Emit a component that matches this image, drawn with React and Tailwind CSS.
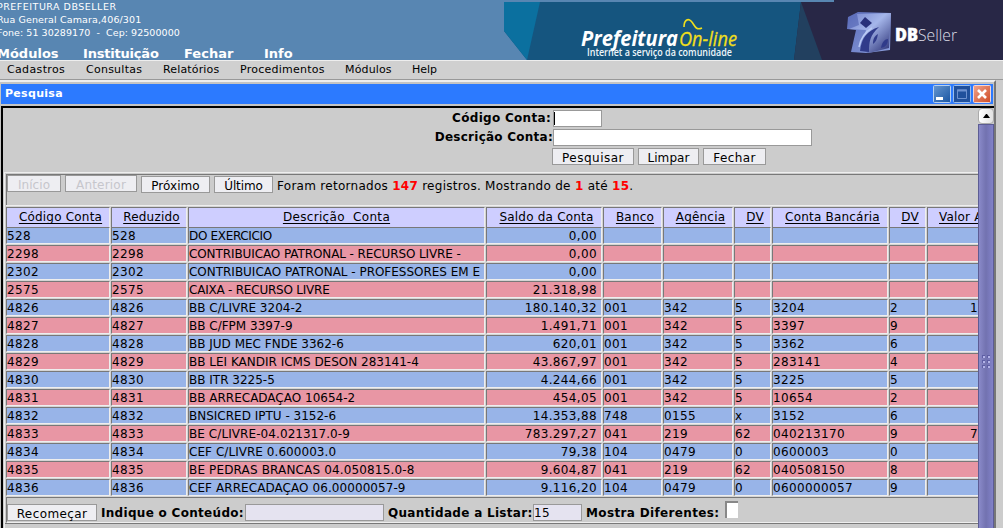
import React from "react";

const rows = [
  ["528", "DO EXERCICIO", "0,00", "", "", "", "", "", ""],
  ["2298", "CONTRIBUICAO PATRONAL - RECURSO LIVRE -", "0,00", "", "", "", "", "", ""],
  ["2302", "CONTRIBUICAO PATRONAL - PROFESSORES EM E", "0,00", "", "", "", "", "", ""],
  ["2575", "CAIXA - RECURSO LIVRE", "21.318,98", "", "", "", "", "", ""],
  ["4826", "BB C/LIVRE 3204-2", "180.140,32", "001", "342", "5", "3204", "2", "1"],
  ["4827", "BB C/FPM 3397-9", "1.491,71", "001", "342", "5", "3397", "9", ""],
  ["4828", "BB JUD MEC FNDE 3362-6", "620,01", "001", "342", "5", "3362", "6", ""],
  ["4829", "BB LEI KANDIR ICMS DESON 283141-4", "43.867,97", "001", "342", "5", "283141", "4", ""],
  ["4830", "BB ITR 3225-5", "4.244,66", "001", "342", "5", "3225", "5", ""],
  ["4831", "BB ARRECADAÇAO 10654-2", "454,05", "001", "342", "5", "10654", "2", ""],
  ["4832", "BNSICRED IPTU - 3152-6", "14.353,88", "748", "0155", "x", "3152", "6", ""],
  ["4833", "BE C/LIVRE-04.021317.0-9", "783.297,27", "041", "219", "62", "040213170", "9", "7"],
  ["4834", "CEF C/LIVRE 0.600003.0", "79,38", "104", "0479", "0", "0600003", "0", ""],
  ["4835", "BE PEDRAS BRANCAS 04.050815.0-8", "9.604,87", "041", "219", "62", "040508150", "8", ""],
  ["4836", "CEF ARRECADAÇAO 06.00000057-9", "9.116,20", "104", "0479", "0", "0600000057", "9", ""],
];

// Letter spacing of the description column, by account code.
const descriptionTracking = {
  528: "tracking-[-0.33px]",
  2298: "tracking-[-0.1px]",
  2302: "tracking-[-0.02px]",
  2575: "tracking-[-0.22px]",
  4833: "tracking-[0.08px]",
  4834: "tracking-[0.05px]",
  4835: "tracking-[0.15px]",
  4836: "tracking-[0.07px]",
};

const headers = ["Código Conta", "Reduzido", "Descrição\u00a0 Conta", "Saldo da Conta", "Banco", "Agência", "DV", "Conta Bancária", "DV"];

const columns = "grid grid-cols-[104px_76px_297px_116px_59px_70px_37px_116px_37px_110px] gap-x-px";
const inset = "border border-t-[#787878] border-l-[#787878] border-r-[#eeeeee] border-b-[#eeeeee]";

function Button({ className = "", children }) {
  return (
    <button className={`flex h-[17px] shrink-0 items-center justify-center border border-[#999] bg-[#eeeef2] pt-[3px] leading-none ${className}`}>
      {children}
    </button>
  );
}

function Banner() {
  return (
    <svg className="absolute right-0 top-0 h-[60px] w-[499px]" viewBox="504 0 499 60">
      <defs>
        <linearGradient id="cube" x1="0" y1="0" x2="1" y2="1">
          <stop offset="0" stopColor="#7585ce" />
          <stop offset=".45" stopColor="#a5b6ea" />
          <stop offset="1" stopColor="#242a70" />
        </linearGradient>
        <linearGradient id="side" x1="0" y1="0" x2="1" y2="1">
          <stop offset="0" stopColor="#596ab8" />
          <stop offset="1" stopColor="#8c9fdc" />
        </linearGradient>
      </defs>
      <path d="M504 2H834V0H1003V60H527L504 31Z" fill="#15557f" />
      <path d="M504 2H540L527 60L504 31Z" fill="#0b709f" />
      <path d="M801 2H834V0H1003V60H794Z" fill="#282746" />
      <path d="M801 2L822 60H794Z" fill="#22405f" />
      <text x="581" y="45.5" fill="#fff" fontFamily="Open Sans, sans-serif" fontSize="20.5" fontWeight="700" fontStyle="italic" textLength="97" lengthAdjust="spacingAndGlyphs">Prefeitura</text>
      <text x="679" y="45.5" fill="#f0df1c" stroke="#f0df1c" strokeWidth=".3" fontFamily="Open Sans, sans-serif" fontSize="20.5" fontStyle="italic" textLength="58" lengthAdjust="spacingAndGlyphs">On-line</text>
      <path d="M684 27C684 20 688 18 691 21C695 25 695 31 702 28" fill="none" stroke="#f0df1c" strokeWidth="1.6" />
      <text x="587" y="56" fill="#eef5fa" fontFamily="Open Sans, sans-serif" fontSize="10" fontWeight="600" textLength="145" lengthAdjust="spacingAndGlyphs">Internet a serviço da comunidade</text>
      <path d="M848 17L858 12L891 13L890 50L866 53L851 52L856 30L847 29Z" fill="url(#side)" />
      <path d="M857 14L891 13L889 48L869 53L861 50L866 30L849 29L859 25Z" fill="url(#cube)" />
      <path d="M865 17L872 23L866 28L860 23Z" fill="#28307a" />
      <path d="M860 51C862 37 867 31 879 27C870 35 869 42 869 52ZM873 44C873 38 875 36 878 34C877 39 876 42 873 44ZM881 48C882 42 885 39 888 39C888 44 886 47 881 48Z" fill="#303b8a" />
      <path d="M859 47C861 37 865 32 872 28" fill="none" stroke="#b9c9f5" strokeWidth="1.5" />
      <text x="895" y="41" fill="#fff" stroke="#fff" strokeWidth=".4" fontFamily="Open Sans, sans-serif" fontSize="17" fontWeight="800" textLength="23" lengthAdjust="spacingAndGlyphs">DB</text>
      <text x="918" y="41" fill="#dedee8" fontFamily="Open Sans, sans-serif" fontSize="17" fontWeight="300" textLength="39" lengthAdjust="spacingAndGlyphs">Seller</text>
    </svg>
  );
}

function WindowControls() {
  return (
    <svg className="h-[18px] w-[58px]" viewBox="0 0 58 18">
      <defs>
        <linearGradient id="blue" x1="0" y1="0" x2="1" y2="1"><stop stopColor="#6797d0" /><stop offset="1" stopColor="#1955a2" /></linearGradient>
        <linearGradient id="red" x1="0" y1="0" x2="1" y2="1"><stop stopColor="#f0a48d" /><stop offset="1" stopColor="#cf4b25" /></linearGradient>
      </defs>
      <rect x=".5" y=".5" width="17" height="17" rx="1" fill="url(#blue)" stroke="#b8d0ee" />
      <rect x="3" y="12" width="7" height="3" fill="#fff" />
      <rect x="20.5" y=".5" width="17" height="17" rx="1" fill="#20509c" stroke="#9bbce8" />
      <path d="M24.5 5H33.5V13.5H24.5Z" fill="none" stroke="#6d91d0" />
      <path d="M24 5.5H34" stroke="#6d91d0" strokeWidth="2" />
      <rect x="40.5" y=".5" width="17" height="17" rx="1" fill="url(#red)" stroke="#f2d6d5" />
      <path d="M45 5L53 13M53 5L45 13" stroke="#fff" strokeWidth="2.6" />
    </svg>
  );
}

function Scrollbar() {
  return (
    <div className="flex w-4 shrink-0 flex-col">
      <div className="flex h-4 items-center justify-center rounded-sm border border-[#aaa] bg-linear-to-r from-white to-[#e2e2e2]">
        <svg className="h-1 w-[7px]" viewBox="0 0 7 4"><path d="M3 0H4L7 4H0Z" /></svg>
      </div>
      <div className="flex flex-1 justify-center border-x border-t border-[#5c5c94] bg-linear-to-r from-[#8a8ac9] via-[#7272b0] to-[#8282c9] pt-[230px]">
        <svg className="h-[13px] w-2" viewBox="0 0 8 13">
          {[0, 5, 10].map((y) => [0, 5].map((x) => (
            <g key={`${x}-${y}`}><path d={`M${x} ${y}h3v3h-3z`} fill="#5e5ea5" /><path d={`M${x + 1} ${y + 1}h2v2h-2z`} fill="#b2b2e8" /></g>
          )))}
        </svg>
      </div>
    </div>
  );
}

export default function App() {
  return (
    <div className="relative flex h-[528px] w-[1003px] flex-col overflow-hidden bg-[#ccc] font-['DejaVu_Sans',sans-serif] text-[12px] text-black">
      <header className="relative h-[60px] shrink-0 overflow-hidden bg-[#5886b2] text-white">
        <div className="-ml-[3px] flex flex-col whitespace-pre text-[9.5px] leading-[13px]">
          <span className="tracking-[0.5px]">PREFEITURA DBSELLER</span>
          <span className="tracking-[0.12px]">Rua General Camara,406/301</span>
          <span className="tracking-[0.05px]">Fone: 51 30289170  -  Cep: 92500000</span>
        </div>
        <nav className="-ml-[3px] mt-[6px] grid grid-cols-[86px_101px_80px_60px] text-[13px] leading-[17px] font-bold">
          <span>Módulos</span><span className="tracking-[-0.2px]">Instituição</span><span>Fechar</span><span>Info</span>
        </nav>
        <Banner />
      </header>
      <nav className="grid h-5 shrink-0 grid-cols-[79px_77px_77px_105px_67px_60px] border-t border-b border-t-[#eee] border-b-[#999] bg-[#d0d0d0] pl-[7px] text-[11px] leading-[17px]">
        <span className="tracking-[0.35px]">Cadastros</span><span className="tracking-[0.25px]">Consultas</span><span className="tracking-[0.15px]">Relatórios</span><span className="tracking-[0.25px]">Procedimentos</span><span className="tracking-[0.15px]">Módulos</span><span>Help</span>
      </nav>
      <main className="flex h-[448px] w-[996px] flex-col border-t-2 border-r-2 border-t-[#eee] border-r-[#777] bg-[#c4c4c4] pt-[2px]">
        <div className="ml-px mr-px flex h-5 shrink-0 items-center justify-between bg-[#2c7aff] pl-1 pr-[2px] text-[11px] font-bold text-white">
          <span className="tracking-[0.3px]">Pesquisa</span><WindowControls />
        </div>
        <div className="ml-px mt-[2px] flex min-h-0 flex-1 border-t-2 border-l-2 border-black bg-[#ccc]">
          <div className="min-w-0 flex-1 overflow-hidden">
            <div className="flex h-[19px] pt-[2px]">
              <label className="w-[548px] text-right font-bold leading-4 tracking-[0.3px]">Código Conta:</label>
              <div className="ml-[2px] h-[17px] w-[49px] border border-[#999] bg-white"><div className="mt-px h-[13px] w-px bg-black" /></div>
            </div>
            <div className="flex h-[19px] pt-[2px]">
              <label className="w-[550px] whitespace-nowrap text-right font-bold leading-[17px] tracking-[0.25px]">Descrição Conta:</label>
              <div className="h-[17px] w-[259px] border border-[#999] bg-white" />
            </div>
            <div className="flex h-[26px] gap-1 pl-[549px] pt-[2px]">
              <Button className="w-[82px] tracking-[0.5px]">Pesquisar</Button><Button className="w-[61px] tracking-[0.1px]">Limpar</Button><Button className="w-[63px] tracking-[0.4px]">Fechar</Button>
            </div>
            <div className="ml-px h-[358px] border-t border-l border-[#eee]">
              <div className="ml-px mt-px h-[31px] border-t border-l border-[#787878]">
                <div className="flex">
                  <Button className="w-[54px] text-[#c6c6cc] tracking-[0.05px]">Início</Button>
                  <Button className="ml-1 w-[72px] text-[#c6c6cc] tracking-[0.2px]">Anterior</Button>
                  <Button className="ml-1 mt-px w-[69px] tracking-[0.05px]">Próximo</Button>
                  <Button className="ml-1 mt-px w-[59px] tracking-[-0.1px]">Último</Button>
                  <span className="ml-1 whitespace-nowrap leading-[22px] tracking-[0.28px]">Foram retornados <b className="text-[#f00]">147</b> registros. Mostrando de <b className="text-[#f00]">1</b> até <b className="text-[#f00]">15</b>.</span>
                </div>
              </div>
              <div className="ml-px w-[1040px] border-t border-[#eee] bg-[#d4d4d4] py-px">
                <div className={`${columns} mb-px h-[19px]`}>
                  {headers.map((h, i) => <div key={i} className={`${inset} bg-[#ceceff] pl-[5px] text-center leading-[19px] tracking-[0.2px] whitespace-nowrap underline underline-offset-2 ${i === 2 ? "pr-[5px] tracking-[0.32px]" : ""}`}>{h}</div>)}
                  <div className={`${inset} bg-[#ceceff] pl-[11px] leading-[19px] tracking-[0.2px] underline underline-offset-2`}>Valor Atual</div>
                </div>
                <div className="flex flex-col gap-px">
                  {rows.map((r, i) => (
                    <div key={r[0]} className={`${columns} h-[17px] leading-4`}>
                      {[r[0], ...r].map((v, j) => (
                        <div key={j} className={`${inset} overflow-hidden whitespace-nowrap ${i % 2 ? "bg-[#e896a4]" : "bg-[#98b4e8]"} ${j === 2 ? descriptionTracking[r[0]] || "tracking-normal" : "tracking-[0.365px]"} ${j === 3 ? "pr-1 text-right" : j === 9 ? "pl-[42px]" : ""}`}>{v}</div>
                      ))}
                    </div>
                  ))}
                </div>
              </div>
              <div className="ml-px flex h-[26px] border-t border-l border-[#787878] border-b border-b-[#eee]">
                <Button className="mt-[6px] w-[90px] tracking-[0.4px]">Recomeçar</Button>
                <b className="ml-1 mt-[6px] w-[144px] leading-[18px] tracking-[0.3px] whitespace-nowrap">Indique o Conteúdo:</b>
                <div className="mt-[6px] h-[17px] w-[139px] border border-[#999] bg-[#e5e3f0]" />
                <b className="ml-1 mt-[6px] w-[145px] leading-[18px] tracking-[0.3px] whitespace-nowrap">Quantidade a Listar:</b>
                <div className="mt-[6px] h-[17px] w-[49px] border border-[#999] bg-[#e5e3f0] leading-[17px] tracking-[0.365px]">15</div>
                <b className="ml-1 mt-[6px] w-[139px] leading-[18px] tracking-[0.35px] whitespace-nowrap">Mostra Diferentes:</b>
                <div className="mt-[3px] h-[17px] w-[13px] border-t-2 border-l-2 border-[#888] bg-white" />
              </div>
              <div className="h-px bg-[#787878]" />
            </div>
          </div>
          <Scrollbar />
        </div>
      </main>
    </div>
  );
}
